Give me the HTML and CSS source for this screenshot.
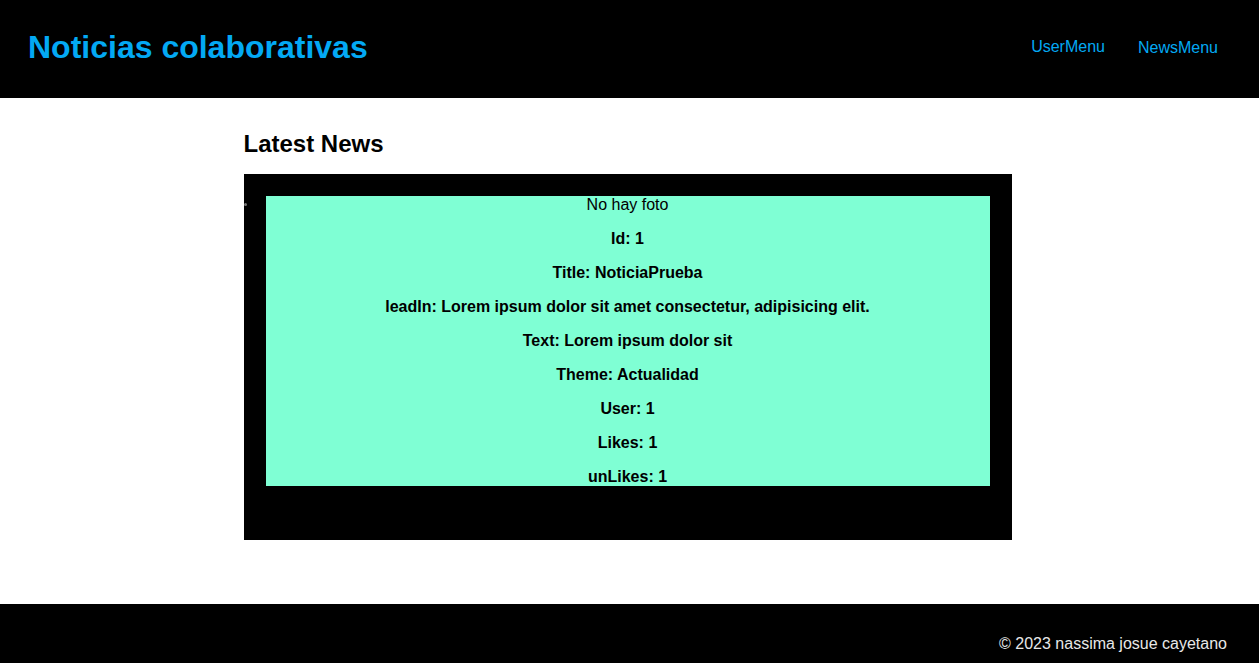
FILE: index.html
```html
<!DOCTYPE html>
<html lang="es">
<head>
<meta charset="utf-8">
<title>Noticias colaborativas</title>
<link rel="stylesheet" href="styles.css">
</head>
<body>
<header class="site-header">
  <h1 class="brand">Noticias colaborativas</h1>
  <nav class="nav">
    <a class="nav-link nav-user" href="#">UserMenu</a>
    <a class="nav-link" href="#">NewsMenu</a>
  </nav>
</header>
<main class="main">
  <h2 class="section-title">Latest News</h2>
  <ul class="news-list">
    <li class="news-item">
      <article class="news-card">
        <div class="no-photo">No hay foto</div>
        <p>Id: 1</p>
        <p>Title: NoticiaPrueba</p>
        <p>leadIn: Lorem ipsum dolor sit amet consectetur, adipisicing elit.</p>
        <p>Text: Lorem ipsum dolor sit</p>
        <p>Theme: Actualidad</p>
        <p>User: 1</p>
        <p>Likes: 1</p>
        <p class="last">unLikes: 1</p>
      </article>
    </li>
  </ul>
</main>
<footer class="site-footer">
  <p class="copy">© 2023 nassima josue cayetano</p>
</footer>
</body>
</html>
```
FILE: styles.css
```css
* { box-sizing: border-box; }
html, body { margin: 0; padding: 0; }
body {
  font-family: "Liberation Sans", Arial, sans-serif;
  font-size: 16px;
  color: #000;
  background: #fff;
}
.site-header {
  background: #000;
  height: 98px;
  display: flex;
  align-items: center;
  justify-content: space-between;
  padding: 0 41px 0 28px;
}
.brand {
  margin: 0;
  font-size: 32px;
  font-weight: bold;
  color: #03a9f4;
  line-height: 37px;
  position: relative;
  top: -2px;
}
.nav {
  display: flex;
  gap: 33px;
  align-items: center;
  position: relative;
  top: -1px;
}
.nav-link {
  color: #03a9f4;
  text-decoration: none;
  font-size: 16px;
  line-height: 18px;
}
.nav-user { margin-top: -2px; }
.main {
  width: 768px;
  margin: 0 auto;
  padding: 32px 0 64px;
  position: relative;
  left: -2px;
}
.section-title {
  margin: 0 0 16px;
  font-size: 24px;
  line-height: 28px;
  font-weight: bold;
}
.news-list {
  margin: 0;
  padding: 0;
  list-style: none;
}
.news-item {
  background: #000;
  padding: 22px 22px 54px;
  position: relative;
}
.news-item::before {
  content: "";
  position: absolute;
  left: 0;
  top: 29px;
  width: 3px;
  height: 3px;
  border-radius: 50%;
  background: #777;
}
.news-card {
  background: #7fffd4;
  height: 290px;
  text-align: center;
}
.no-photo {
  line-height: 18px;
}
.news-card p {
  margin: 16px 0;
  font-weight: bold;
  line-height: 18px;
}
.news-card p.last { margin-bottom: 0; }
.site-footer {
  background: #000;
  padding: 31px 32px 30px;
}
.copy {
  margin: 0;
  text-align: right;
  color: #e8e8e8;
  line-height: 18px;
}
```
